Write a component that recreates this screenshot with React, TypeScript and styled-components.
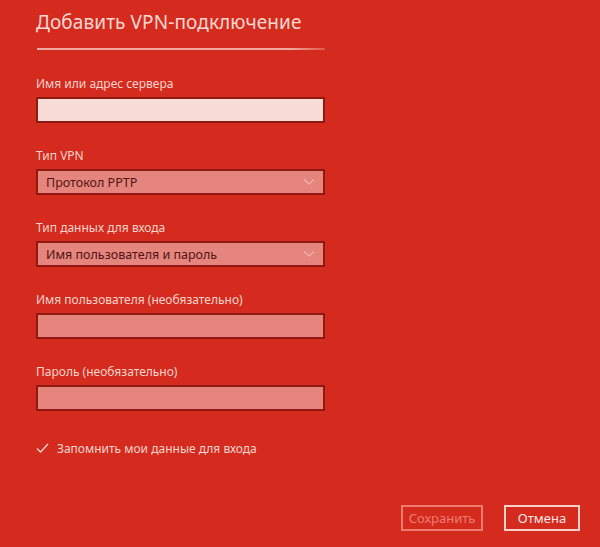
import styled, { createGlobalStyle } from "styled-components";

const Global = createGlobalStyle`
    html, body {
        margin: 0;
        padding: 0;
        background: #d52b1e;
    }
    body {
        font-family: "Noto Sans", "Open Sans", sans-serif;
    }
`;

const Page = styled.div`
    width: 600px;
    height: 547px;
    background: #d52b1e;
    box-sizing: border-box;
    padding: 8px 20px 0 36px;
    display: flex;
    flex-direction: column;
`;

const Title = styled.h1`
    margin: 0;
    font-weight: 400;
    font-size: 19px;
    line-height: 28px;
    color: #f8d8d2;
    letter-spacing: 0.1px;
`;

const Divider = styled.div`
    width: 288px;
    height: 2px;
    margin: 12px 0 26px 1px;
    background: linear-gradient(to right, #eeaaa2 0%, #eeaaa2 88%, #dc5a4c 100%);
`;

const Field = styled.div`
    display: flex;
    flex-direction: column;
    width: 289px;
    margin-bottom: 25px;
`;

const Label = styled.label`
    font-size: 12px;
    line-height: 16px;
    color: #f6d3cc;
    margin-bottom: 5px;
`;

const Input = styled.div<{ $focus?: boolean }>`
    height: 26px;
    box-sizing: border-box;
    border: 2px solid #8e1b12;
    background: ${(p) => (p.$focus ? "#f8dad7" : "#e5857e")};
`;

const Select = styled.div`
    height: 26px;
    box-sizing: border-box;
    border: 2px solid #8e1b12;
    background: #e5857e;
    display: flex;
    align-items: center;
    justify-content: space-between;
    padding: 0 8px 0 8px;
    font-size: 12.5px;
    color: #521410;
`;

const Chevron = () => (
    <svg width="12" height="8" viewBox="0 0 12 8">
        <polyline points="1,1.5 6,6 11,1.5" fill="none" stroke="#f4b2aa" strokeWidth="1.2" />
    </svg>
);

const CheckRow = styled.div`
    display: flex;
    align-items: center;
    gap: 8px;
    margin-top: 3px;
    height: 18px;
    font-size: 12px;
    color: #f6d3cc;
`;

const Buttons = styled.div`
    margin-top: 48px;
    display: flex;
    justify-content: flex-end;
    gap: 21px;
`;

const Button = styled.button<{ $disabled?: boolean }>`
    height: 26px;
    box-sizing: border-box;
    background: transparent;
    font-family: "Noto Sans", "Open Sans", sans-serif;
    font-size: 13px;
    padding: 0;
    border: 2px solid ${(p) => (p.$disabled ? "#ee7b6f" : "#f6d0c9")};
    color: ${(p) => (p.$disabled ? "#f07c70" : "#fbe6e2")};
    width: ${(p) => (p.$disabled ? "82px" : "76px")};
`;

export default function App() {
    return (
        <Page>
            <Global />
            <Title>Добавить VPN-подключение</Title>
            <Divider />
            <Field>
                <Label>Имя или адрес сервера</Label>
                <Input $focus />
            </Field>
            <Field>
                <Label>Тип VPN</Label>
                <Select>
                    <span>Протокол PPTP</span>
                    <Chevron />
                </Select>
            </Field>
            <Field>
                <Label>Тип данных для входа</Label>
                <Select>
                    <span>Имя пользователя и пароль</span>
                    <Chevron />
                </Select>
            </Field>
            <Field>
                <Label>Имя пользователя (необязательно)</Label>
                <Input />
            </Field>
            <Field>
                <Label>Пароль (необязательно)</Label>
                <Input />
            </Field>
            <CheckRow>
                <svg width="13" height="10" viewBox="0 0 13 10">
                    <polyline points="1,5.5 4.5,9 12,1" fill="none" stroke="#f6d3cc" strokeWidth="1.3" />
                </svg>
                <span>Запомнить мои данные для входа</span>
            </CheckRow>
            <Buttons>
                <Button $disabled>Сохранить</Button>
                <Button>Отмена</Button>
            </Buttons>
        </Page>
    );
}
